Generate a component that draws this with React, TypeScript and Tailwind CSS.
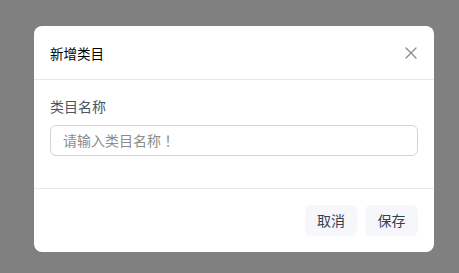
import React from "react";

export default function App() {
  return (
    <div
      className="w-[459px] h-[273px] bg-[#808080] pt-[26px] pl-[34px]"
      style={{ fontFamily: '"Noto Sans CJK SC", "Noto Sans", sans-serif' }}
    >
      <div className="w-[400px] h-[226px] bg-white rounded-[8px] flex flex-col">
        <div className="h-[54px] border-b border-[#e5e7eb] flex items-center justify-between pl-[16px] pr-[17px]">
          <span className="text-[13.5px] text-black leading-[20px]">新增类目</span>
          <svg width="12" height="12" viewBox="0 0 12 12" className="mt-[1px]">
            <path d="M1 1L11 11M11 1L1 11" stroke="#888" strokeWidth="1.3" strokeLinecap="round" />
          </svg>
        </div>
        <div className="h-[108px] px-[16px] pt-[16px]">
          <div className="text-[14px] leading-[20px] text-[#4b5563]">类目名称</div>
          <div className="mt-[9px] h-[31px] border border-[#d1d5db] rounded-[6px] flex items-center pl-[12px]">
            <span className="text-[14px] text-[#8c8c8c]">
              请输入类目名称
              <span style={{ fontFamily: '"Noto Sans CJK TC", sans-serif' }}>！</span>
            </span>
          </div>
        </div>
        <div className="border-t border-[#e5e7eb] flex-1 flex items-center justify-end gap-[8px] px-[16px]">
          <button className="w-[52px] h-[31px] rounded-[6px] bg-[#f5f7fa] text-[14px] text-[#374151]">取消</button>
          <button className="w-[53px] h-[31px] rounded-[6px] bg-[#f5f7fa] text-[14px] text-[#374151]">保存</button>
        </div>
      </div>
    </div>
  );
}
